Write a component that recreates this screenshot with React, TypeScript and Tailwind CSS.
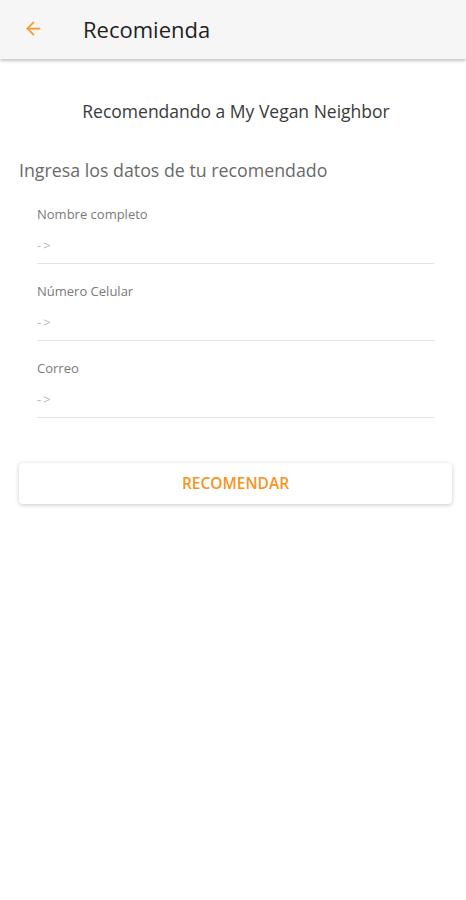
import { ArrowLeft } from 'lucide-react';

const fields = ['Nombre completo', 'Número Celular', 'Correo'];

export default function App() {
  return (
    <div className="min-h-screen bg-white" style={{ fontFamily: '"Open Sans", "Noto Sans", sans-serif' }}>
      {/* Header */}
      <div className="h-[59px] bg-[#f6f6f6] flex items-center shadow-[0_2px_3px_rgba(0,0,0,0.22)] relative z-10">
        <ArrowLeft className="w-[21px] h-[21px] text-[#f39a2b] ml-[23px] -mt-[2px]" strokeWidth={2} />
        <h1 className="ml-[39px] text-[22px] text-[#1f1f1f] leading-none -mt-[2px]">Recomienda</h1>
      </div>

      <p className="mt-[39px] text-center text-[17.5px] text-[#3a3a3a] pl-[6px]">Recomendando a My Vegan Neighbor</p>

      <p className="mt-[33px] ml-[19px] text-[17.8px] text-[#6a6a6a]">Ingresa los datos de tu recomendado</p>

      <div className="mt-[3px] ml-[37px] mr-[32px] flex flex-col">
        {fields.map((f) => (
          <div key={f} className="border-b border-[#e3e3e3] pt-[18px] pb-[8px]">
            <div className="text-[13px] leading-[18px] text-[#7a7a7a]">{f}</div>
            <div className="mt-[12px] text-[13px] leading-[20px] tracking-[2px] text-[#b8b8b8]">-&gt;</div>
          </div>
        ))}
      </div>

      <div className="mt-[45px] ml-[19px] mr-[14px]">
        <button className="w-full h-[41px] bg-white rounded-[4px] shadow-[0_1px_4px_rgba(0,0,0,0.22)] text-[15.5px] font-semibold text-[#f7941d]">
          RECOMENDAR
        </button>
      </div>
    </div>
  );
}
